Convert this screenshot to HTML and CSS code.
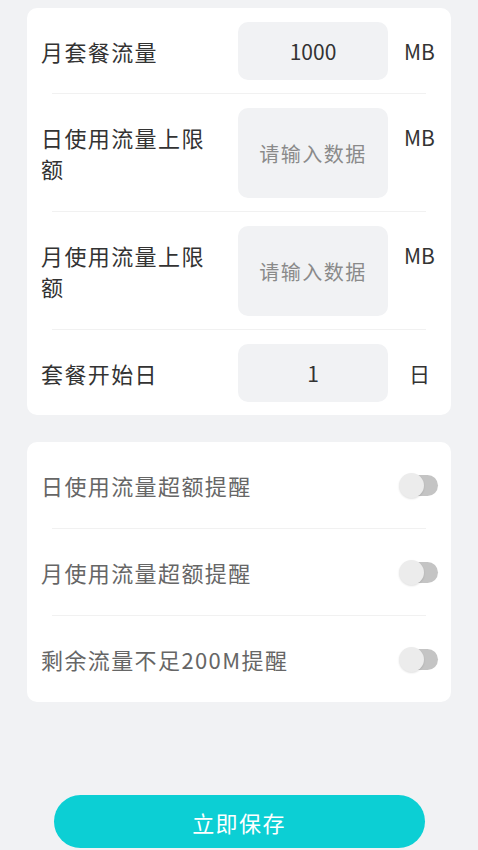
FILE: index.html
```html
<!DOCTYPE html>
<html lang="zh">
<head>
<meta charset="utf-8">
<link rel="stylesheet" href="styles.css">
</head>
<body>
<div class="page">
  <div class="card">
    <div class="row">
      <div class="label">月套餐流量</div>
      <div class="input value short">1000</div>
      <div class="unit">MB</div>
    </div>
    <div class="divider"></div>
    <div class="row">
      <div class="label">日使用流量上限额</div>
      <div class="input placeholder tall">请输入数据</div>
      <div class="unit">MB</div>
    </div>
    <div class="divider"></div>
    <div class="row">
      <div class="label">月使用流量上限额</div>
      <div class="input placeholder tall">请输入数据</div>
      <div class="unit">MB</div>
    </div>
    <div class="divider"></div>
    <div class="row">
      <div class="label">套餐开始日</div>
      <div class="input value short">1</div>
      <div class="unit">日</div>
    </div>
  </div>

  <div class="card switches">
    <div class="srow">
      <div class="slabel">日使用流量超额提醒</div>
      <div class="toggle"><span class="track"></span><span class="thumb"></span></div>
    </div>
    <div class="divider"></div>
    <div class="srow">
      <div class="slabel">月使用流量超额提醒</div>
      <div class="toggle"><span class="track"></span><span class="thumb"></span></div>
    </div>
    <div class="divider"></div>
    <div class="srow">
      <div class="slabel">剩余流量不足200M提醒</div>
      <div class="toggle"><span class="track"></span><span class="thumb"></span></div>
    </div>
  </div>

  <div class="actions">
    <button class="save">立即保存</button>
  </div>
</div>
</body>
</html>
```

FILE: styles.css
```css
html, body {
  margin: 0;
  padding: 0;
  background: #f1f2f4;
}
body {
  font-family: "Noto Sans CJK SC", "Noto Sans", sans-serif;
  color: #333;
}
.page {
  width: 478px;
  height: 850px;
  box-sizing: border-box;
  padding: 8px 27px 0;
  overflow: hidden;
}
.card {
  background: #fff;
  border-radius: 10px;
}
.row {
  display: flex;
  align-items: center;
  padding: 14px 14px 13px;
}
.label {
  flex: 1;
  padding-right: 18px;
  font-size: 22px;
  letter-spacing: 1.4px;
  line-height: 31px;
  color: #333;
}
.input {
  width: 150px;
  background: #f1f2f4;
  border-radius: 10px;
  display: flex;
  align-items: center;
  justify-content: center;
}
.input.short { height: 58px; }
.input.tall { height: 90px; }
.value {
  font-size: 21px;
  color: #333;
}
.placeholder {
  font-size: 20px;
  letter-spacing: 1.5px;
  color: #8a8a8a;
}
.unit {
  align-self: flex-start;
  width: 35px;
  margin-left: 14px;
  line-height: 58px;
  font-size: 21px;
  text-align: center;
  color: #333;
}
.divider {
  height: 1px;
  margin: 0 25px;
  background: #f1f1f1;
}
.switches {
  margin-top: 27px;
}
.srow {
  display: flex;
  align-items: center;
  justify-content: space-between;
  height: 86px;
  padding: 0 13px 0 14px;
}
.slabel {
  font-size: 22px;
  letter-spacing: 1.4px;
  color: #666;
}
.toggle {
  position: relative;
  width: 39px;
  height: 25px;
}
.track {
  position: absolute;
  left: 6px;
  top: 2px;
  width: 33px;
  height: 21px;
  border-radius: 11px;
  background: #c4c4c4;
}
.thumb {
  position: absolute;
  left: 0;
  top: 0;
  width: 25px;
  height: 25px;
  border-radius: 50%;
  background: #ececec;
  box-shadow: 0 1px 2px rgba(0,0,0,0.12);
}
.actions {
  display: flex;
  justify-content: center;
  margin-top: 93px;
}
.save {
  width: 371px;
  height: 53px;
  border: none;
  border-radius: 27px;
  background: #0ccfd4;
  color: #fff;
  font-family: "Noto Sans CJK SC", "Noto Sans", sans-serif;
  font-size: 22px;
  letter-spacing: 1.4px;
  padding: 0;
}
```
